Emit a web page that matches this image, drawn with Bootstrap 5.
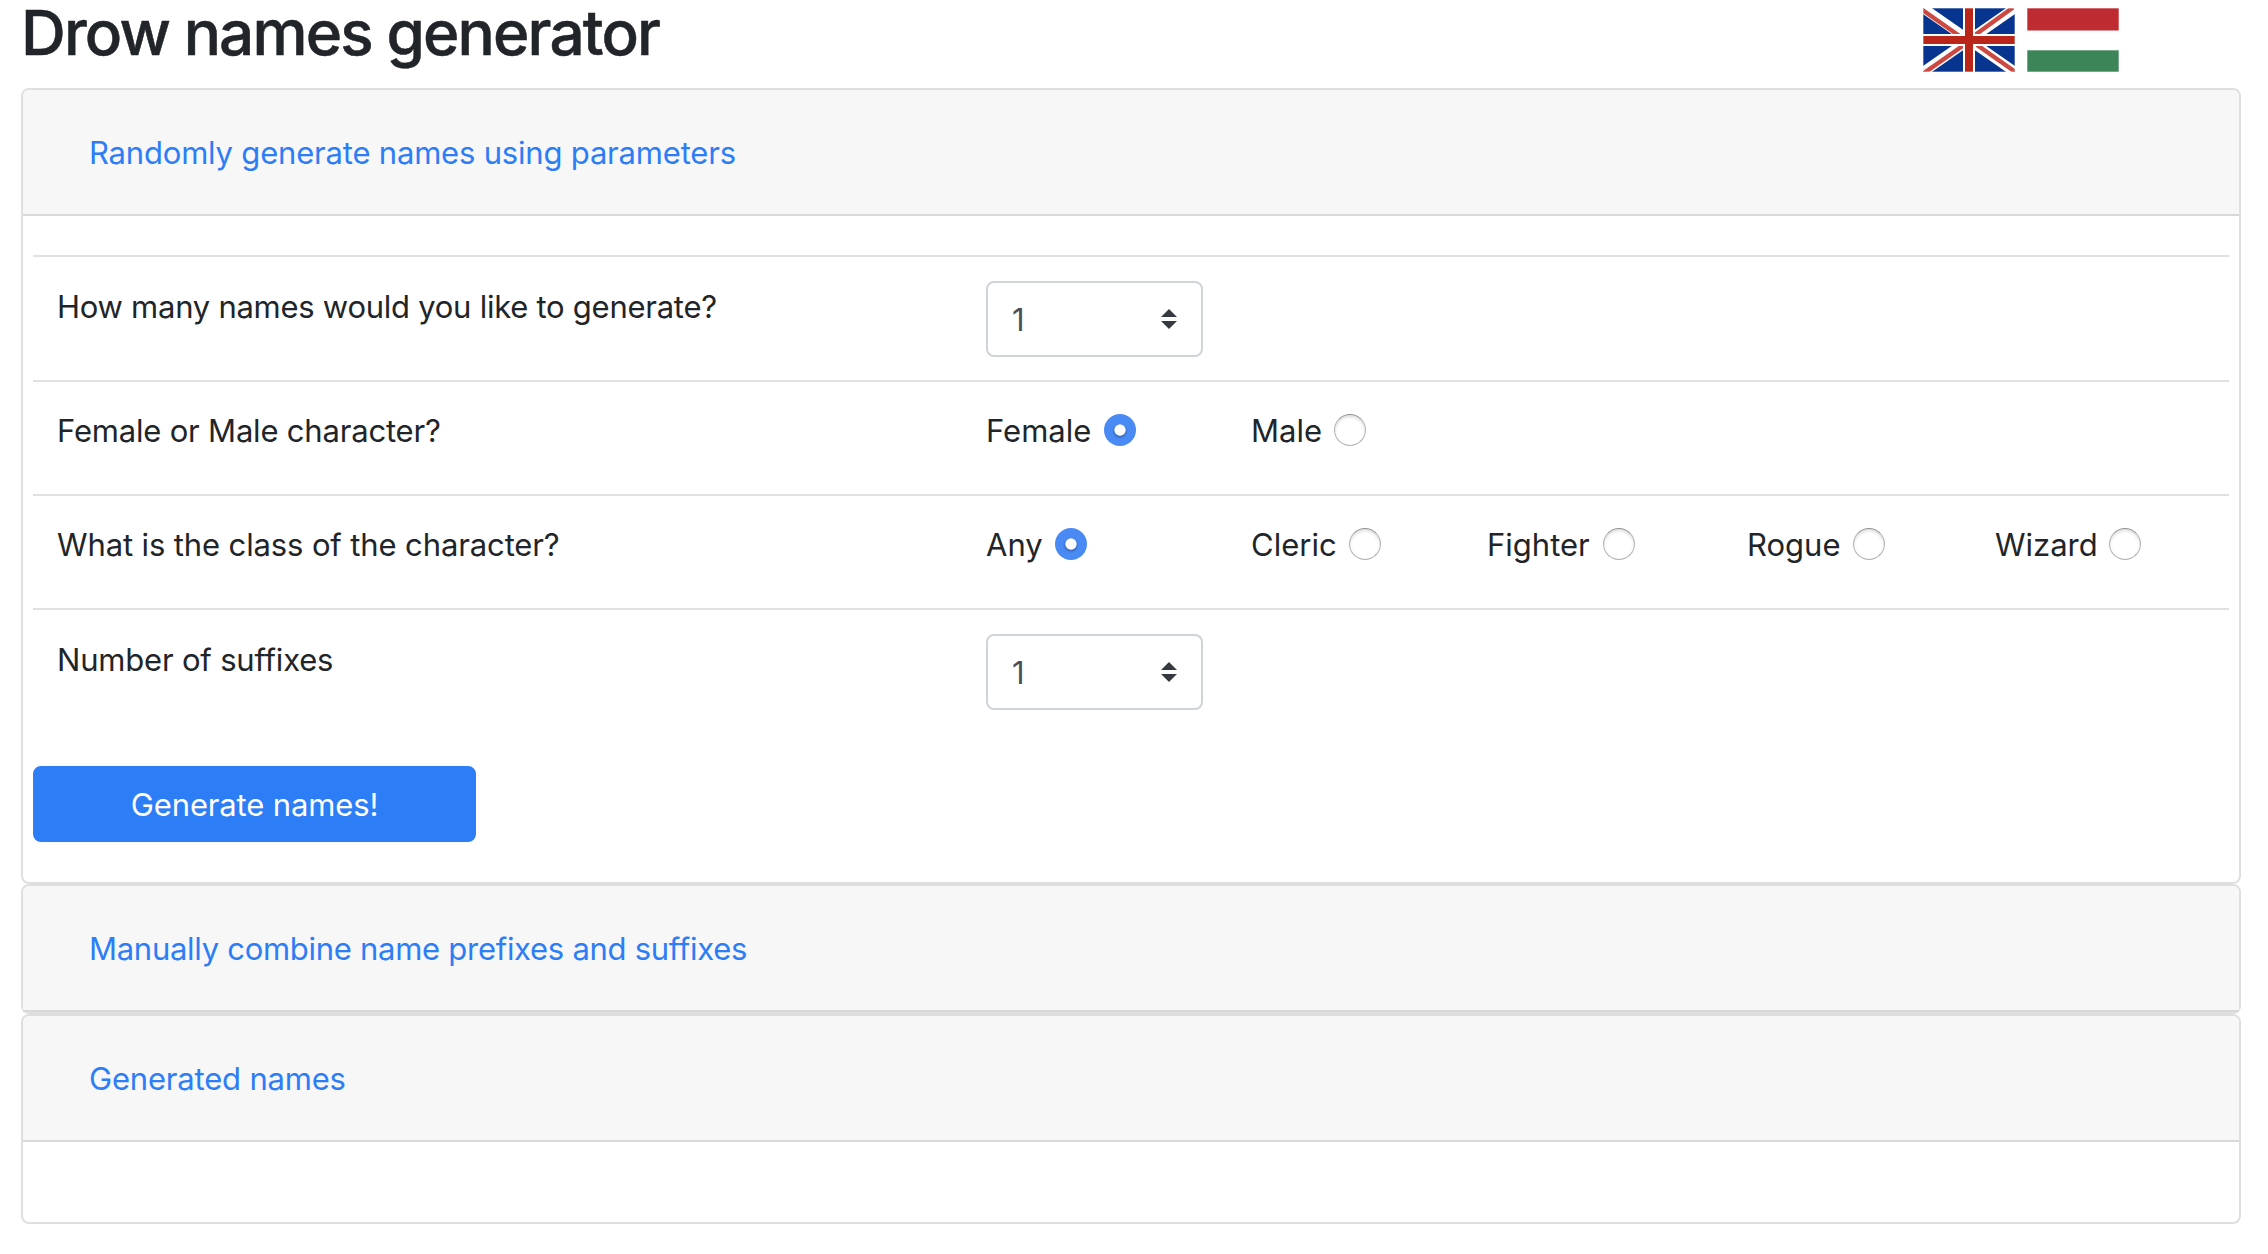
<!DOCTYPE html>
<html lang="en">
<head>
<meta charset="utf-8">
<meta name="viewport" content="width=device-width, initial-scale=1">
<title>Drow names generator</title>
<link href="https://cdn.jsdelivr.net/npm/bootstrap@5.3.0/dist/css/bootstrap.min.css" rel="stylesheet">
<style>
  body { font-family: Inter, "Liberation Sans", sans-serif; font-size: 31px; line-height: 48px; letter-spacing: -.19px; color: #212529; background: #fff; }
  .page { padding: 0 27px 0 21px; }
  .top-bar { height: 88px; }
  .top-bar h1 { font-size: 62px; line-height: 65px; letter-spacing: -1.85px; font-weight: 500; -webkit-text-stroke: .5px #212529; }
  .flags { gap: 12px; padding: 8px 122px 0 0; }
  .flags svg { display: block; }
  .card { --bs-card-border-width: 2px; --bs-card-border-color: #dfdfdf; --bs-card-border-radius: 8px; --bs-card-inner-border-radius: 6px; --bs-card-bg: #fff; }
  .card-header { height: 126px; padding: 0 42px; background: #f7f7f7; border-bottom: 2px solid #d8d8d8; }
  .card-header .btn { font: inherit; line-height: 48px; letter-spacing: inherit; color: #2d7df6; padding: 15px 24px 13px; border: 0; }
  .card-header .btn.tight { letter-spacing: -.28px; }
  .form-body { padding: 39px 10px 40px; }
  .form-line { border-top: 2px solid #dee2e6; padding: 24px 0 0 24px; height: 114px; }
  .form-line.count-line { height: 125px; }
  .form-line.suffix-line { height: 158px; }
  .question { width: 929px; padding-top: 1px; }
  .count-line .question { padding-top: 2px; letter-spacing: -.26px; }
  .class-line .question { letter-spacing: -.12px; }
  .suffix-line .question { padding-top: 2px; }
  .form-select { width: 217px; height: 76px; font-size: 31px; line-height: 48px; padding: 13px 56px 11px 24px; color: #495057; border: 2px solid #ced4da; border-radius: 8px; background-image: url("data:image/svg+xml,%3Csvg xmlns='http://www.w3.org/2000/svg' viewBox='0 0 16 20'%3E%3Cpath fill='%23343a40' d='M0 8 8 0l8 8zM0 12h16l-8 8z'/%3E%3C/svg%3E"); background-size: 16px 20px; background-position: right 24px center; }
  .option { width: 265px; height: 48px; flex: none; }
  .option.wide-236 { width: 236px; }
  .option.wide-260 { width: 260px; }
  .option.wide-248 { width: 248px; }
  .option.wide-200 { width: 200px; }
  .option label { white-space: nowrap; letter-spacing: 0; padding-top: 2px; }
  .option .form-check-input { width: 32px; height: 32px; margin: 0 0 0 13px; border: 1px solid #b4b4b4; border-top-color: #929292; background-image: none; box-shadow: inset 0 2px 3px rgba(0,0,0,.14); flex: none; }
  .option .form-check-input:checked { border: 0; background: radial-gradient(circle at center, #fff 5.2px, transparent 6px), radial-gradient(circle at 50% 54%, #3c72cb 5.5px, #4a8af4 8px); box-shadow: none; }
  .option .near { margin-left: 12px; }
  .option .nearer { margin-left: 11px; }
  .generate { width: 443px; height: 76px; font-size: 31px; line-height: 48px; letter-spacing: -.14px; padding: 13px 12px 11px; border: 2px solid #2d7df6; border-radius: 8px; background: #2d7df6; color: #fff; }
  .result-body { height: 80px; }
</style>
</head>
<body>
<div class="page">
  <header class="top-bar d-flex justify-content-between align-items-start">
    <h1 class="mb-0 text-nowrap">Drow names generator</h1>
    <div class="flags d-flex">
      <svg width="92" height="64" viewBox="0 0 92 64" role="img" aria-label="English">
        <path fill="#07348f" d="M0 0h92v64H0z"/>
        <path stroke="#fff" stroke-width="10" d="M0 0l92 64M92 0L0 64"/>
        <path fill="none" stroke="#cc4942" stroke-width="4.4" d="M-2 1l40 28M52 27L90-.5M1 65l40-28M54 37l40 28"/>
        <path fill="#fff" d="M40 0h12v26h40v12H52v26H40V38H0V26h40z"/>
        <path fill="#bb261a" d="M42 0h8v28h42v8H50v28h-8V36H0v-8h42z"/>
        <path fill="none" stroke="#fff" stroke-opacity=".3" d="M.5.5h91v63H.5z"/>
      </svg>
      <svg width="92" height="64" viewBox="0 0 92 64" role="img" aria-label="Magyar">
        <path fill="#be2b30" d="M0 0h92v22.5H0z"/>
        <path fill="#3c8558" d="M0 42h92v22H0z"/>
        <path fill="none" stroke="#fff" stroke-opacity=".3" d="M.5 0v64M91.5 0v64M0 .5h92M0 42.5h92M0 63.5h92"/>
      </svg>
    </div>
  </header>

  <main>
    <section class="card">
      <div class="card-header d-flex align-items-center"><button class="btn" type="button">Randomly generate names using parameters</button></div>
      <form class="form-body">
        <div class="form-line count-line d-flex align-items-start">
          <div class="question">How many names would you like to generate?</div>
          <select class="form-select"><option>1</option></select>
        </div>
        <div class="form-line d-flex align-items-start">
          <div class="question">Female or Male character?</div>
          <div class="option d-flex align-items-center"><label for="f">Female</label><input class="form-check-input" type="radio" name="sex" id="f" checked></div>
          <div class="option d-flex align-items-center"><label for="m">Male</label><input class="form-check-input near" type="radio" name="sex" id="m"></div>
        </div>
        <div class="form-line class-line d-flex align-items-start">
          <div class="question">What is the class of the character?</div>
          <div class="option d-flex align-items-center"><label for="a">Any</label><input class="form-check-input near" type="radio" name="cls" id="a" checked></div>
          <div class="option wide-236 d-flex align-items-center"><label for="c">Cleric</label><input class="form-check-input near" type="radio" name="cls" id="c"></div>
          <div class="option wide-260 d-flex align-items-center"><label for="g">Fighter</label><input class="form-check-input" type="radio" name="cls" id="g"></div>
          <div class="option wide-248 d-flex align-items-center"><label for="r">Rogue</label><input class="form-check-input near" type="radio" name="cls" id="r"></div>
          <div class="option wide-200 d-flex align-items-center"><label for="w">Wizard</label><input class="form-check-input nearer" type="radio" name="cls" id="w"></div>
        </div>
        <div class="form-line suffix-line d-flex align-items-start">
          <div class="question">Number of suffixes</div>
          <select class="form-select"><option>1</option></select>
        </div>
        <button class="btn btn-primary generate d-block" type="button">Generate names!</button>
      </form>
    </section>

    <section class="card">
      <div class="card-header d-flex align-items-center"><button class="btn tight" type="button">Manually combine name prefixes and suffixes</button></div>
    </section>

    <section class="card">
      <div class="card-header d-flex align-items-center"><button class="btn" type="button">Generated names</button></div>
      <div class="result-body"></div>
    </section>
  </main>
</div>
<script src="https://cdn.jsdelivr.net/npm/bootstrap@5.3.0/dist/js/bootstrap.bundle.min.js"></script>
</body>
</html>
